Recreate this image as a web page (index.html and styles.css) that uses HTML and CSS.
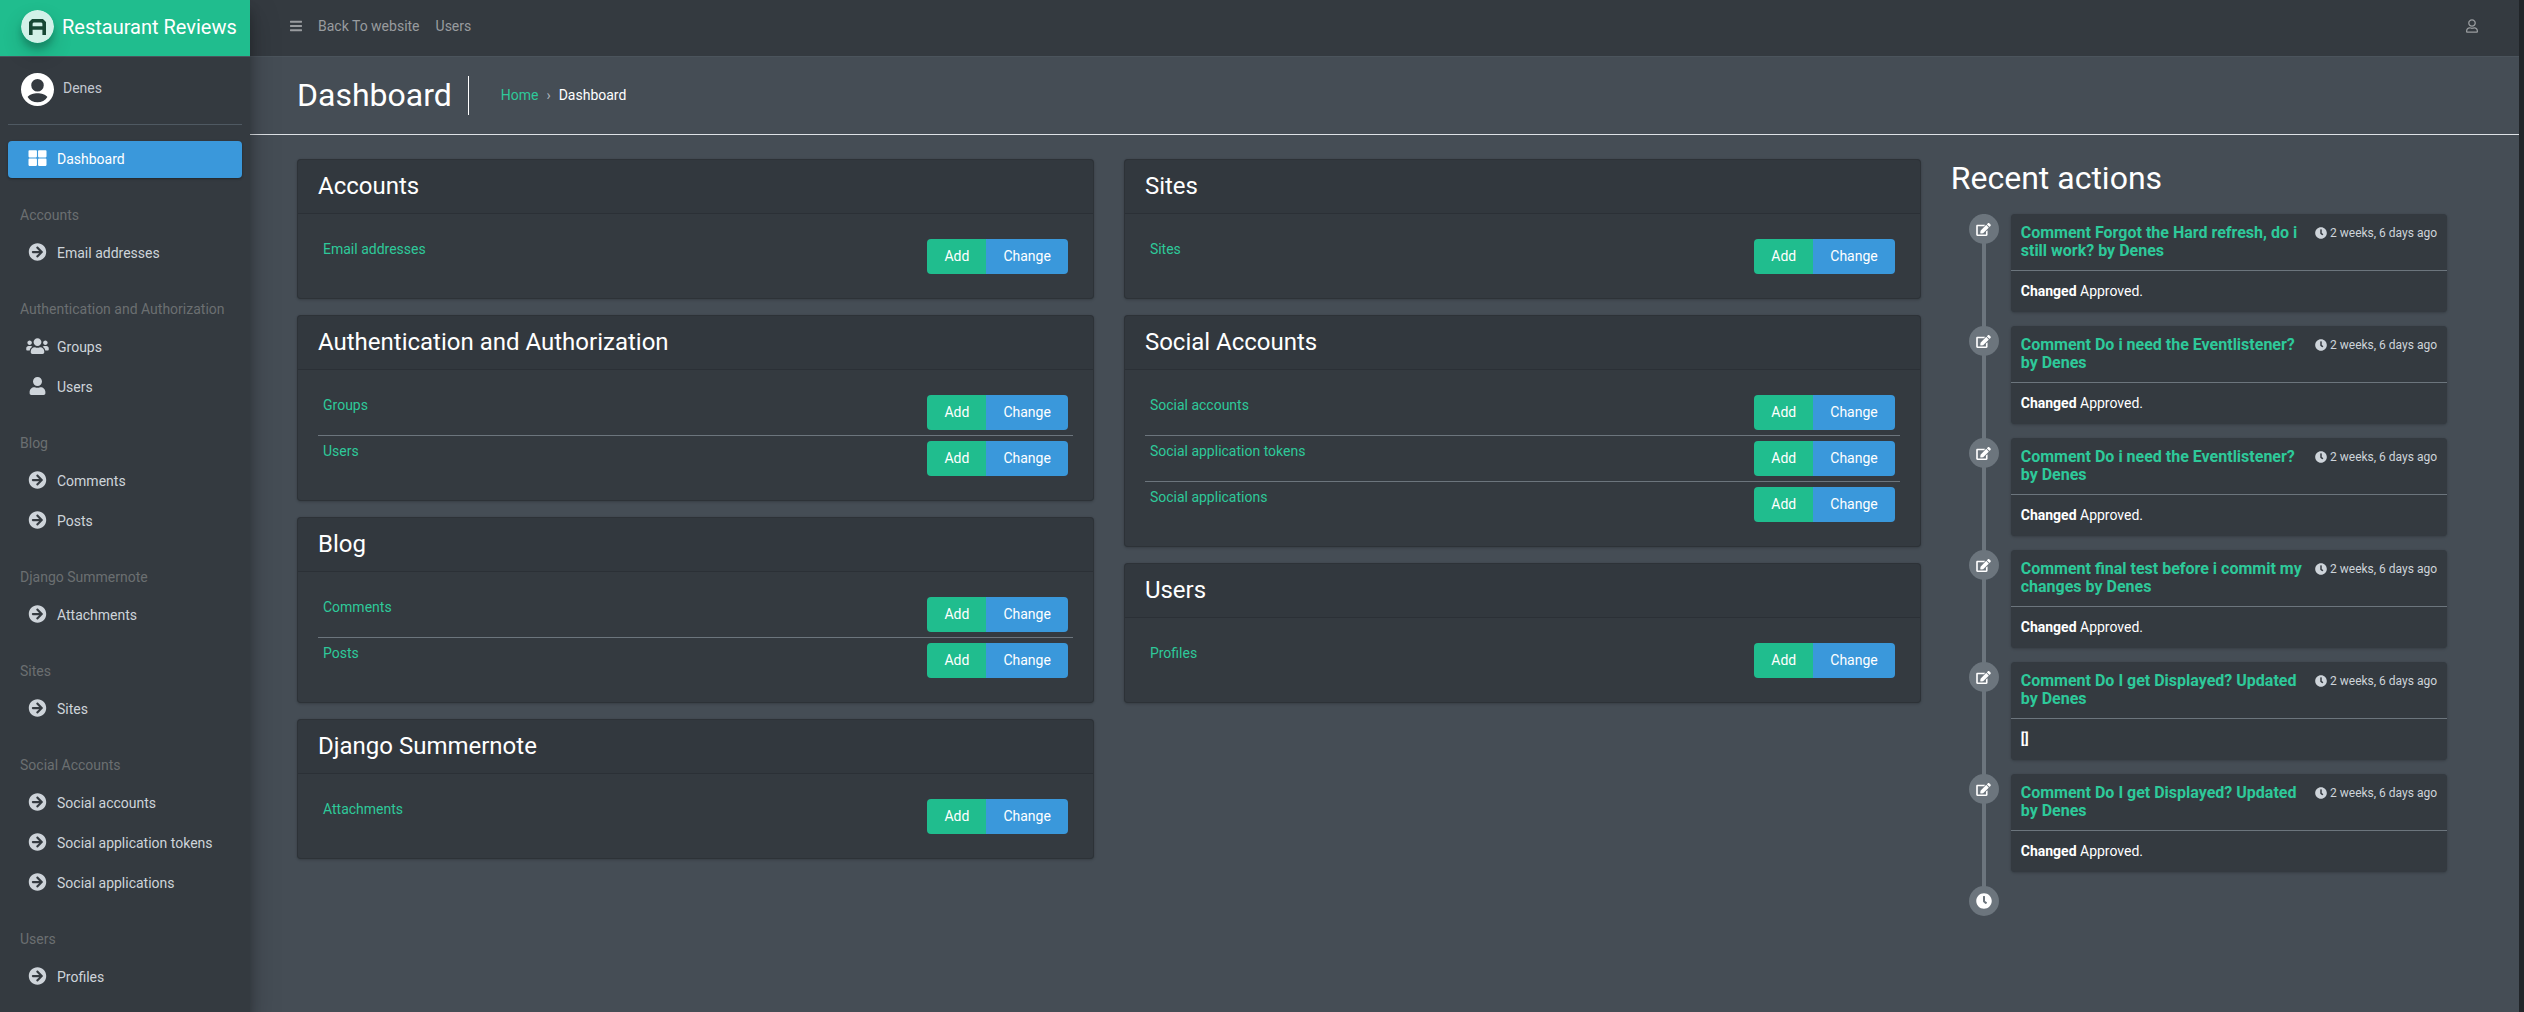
FILE: index.html
```html
<!DOCTYPE html>
<html lang="en">
<head>
<meta charset="utf-8">
<meta name="viewport" content="width=device-width, initial-scale=1">
<title>Dashboard | Restaurant Reviews</title>
<link rel="stylesheet" href="styles.css">
</head>
<body>
<svg class="sprite" aria-hidden="true">
  <symbol id="arrow" viewBox="0 0 512 512"><path d="M256 8c137 0 248 111 248 248S393 504 256 504 8 393 8 256 119 8 256 8zm-28.9 143.6l75.5 72.4H120c-13.3 0-24 10.7-24 24v16c0 13.3 10.7 24 24 24h182.6l-75.5 72.4c-9.7 9.3-9.9 24.8-.4 34.3l11 10.9c9.4 9.4 24.6 9.4 33.9 0L404.3 273c9.4-9.4 9.4-24.6 0-33.9L271.6 106.3c-9.4-9.4-24.6-9.4-33.9 0l-11 10.9c-9.5 9.6-9.3 25.1.4 34.4z"/></symbol>
  <symbol id="tiles" viewBox="0 0 512 512"><path d="M296 32h192c13.3 0 24 10.7 24 24v160c0 13.3-10.7 24-24 24H296c-13.3 0-24-10.7-24-24V56c0-13.3 10.7-24 24-24zm-80 0H24C10.7 32 0 42.7 0 56v160c0 13.3 10.7 24 24 24h192c13.3 0 24-10.7 24-24V56c0-13.3-10.7-24-24-24zM0 296v160c0 13.3 10.7 24 24 24h192c13.3 0 24-10.7 24-24V296c0-13.3-10.7-24-24-24H24c-13.3 0-24 10.7-24 24zm296 184h192c13.3 0 24-10.7 24-24V296c0-13.3-10.7-24-24-24H296c-13.3 0-24 10.7-24 24v160c0 13.3 10.7 24 24 24z"/></symbol>
  <symbol id="group" viewBox="0 0 640 512"><path d="M96 224c35.3 0 64-28.7 64-64s-28.7-64-64-64-64 28.7-64 64 28.7 64 64 64zm448 0c35.3 0 64-28.7 64-64s-28.7-64-64-64-64 28.7-64 64 28.7 64 64 64zm32 32h-64c-17.6 0-33.5 7.1-45.1 18.6 40.3 22.1 68.9 62 75.1 109.4h66c17.7 0 32-14.3 32-32v-32c0-35.3-28.7-64-64-64zm-256 0c61.9 0 112-50.1 112-112S381.9 32 320 32 208 82.1 208 144s50.1 112 112 112zm76.8 32h-8.3c-20.8 10-43.9 16-68.5 16s-47.6-6-68.5-16h-8.3C179.6 288 128 339.6 128 403.2V432c0 26.5 21.5 48 48 48h288c26.5 0 48-21.5 48-48v-28.8c0-63.6-51.6-115.2-115.2-115.2zm-223.7-13.4C161.5 263.1 145.6 256 128 256H64c-35.3 0-64 28.7-64 64v32c0 17.7 14.3 32 32 32h65.9c6.3-47.4 34.9-87.3 75.2-109.4z"/></symbol>
  <symbol id="person" viewBox="0 0 448 512"><path d="M224 256c70.7 0 128-57.3 128-128S294.7 0 224 0 96 57.3 96 128s57.3 128 128 128zm89.6 32h-16.7c-22.2 10.2-46.9 16-72.9 16s-50.6-5.8-72.9-16h-16.7C60.2 288 0 348.2 0 422.4V464c0 26.5 21.5 48 48 48h352c26.5 0 48-21.5 48-48v-41.6c0-74.2-60.2-134.4-134.4-134.4z"/></symbol>
  <symbol id="person-outline" viewBox="0 0 448 512"><path d="M313.6 304c-28.7 0-42.5 16-89.6 16-47.1 0-60.8-16-89.6-16C60.2 304 0 364.2 0 438.4V464c0 26.5 21.5 48 48 48h352c26.5 0 48-21.5 48-48v-25.6c0-74.2-60.2-134.4-134.4-134.4zM400 464H48v-25.6c0-47.6 38.8-86.4 86.4-86.4 14.6 0 38.3 16 89.6 16 51.7 0 74.9-16 89.6-16 47.6 0 86.4 38.8 86.4 86.4V464zM224 288c79.5 0 144-64.5 144-144S303.5 0 224 0 80 64.5 80 144s64.5 144 144 144zm0-240c52.9 0 96 43.1 96 96s-43.1 96-96 96-96-43.1-96-96 43.1-96 96-96z"/></symbol>
  <symbol id="bars" viewBox="0 0 448 512"><path d="M16 132h416c8.8 0 16-7.2 16-16V76c0-8.8-7.2-16-16-16H16C7.2 60 0 67.2 0 76v40c0 8.8 7.2 16 16 16zm0 160h416c8.8 0 16-7.2 16-16v-40c0-8.8-7.2-16-16-16H16c-8.8 0-16 7.2-16 16v40c0 8.8 7.2 16 16 16zm0 160h416c8.8 0 16-7.2 16-16v-40c0-8.8-7.2-16-16-16H16c-8.8 0-16 7.2-16 16v40c0 8.8 7.2 16 16 16z"/></symbol>
  <symbol id="clock" viewBox="0 0 512 512"><path d="M256 8C119 8 8 119 8 256s111 248 248 248 248-111 248-248S393 8 256 8zm92.5 313l-20 25a16 16 0 0 1-22.5 2.5l-67-49.7a40 40 0 0 1-15-31.2V112a16 16 0 0 1 16-16h32a16 16 0 0 1 16 16v144l58 42.5a16 16 0 0 1 2.5 22.5z"/></symbol>
  <symbol id="edit" viewBox="0 0 576 512"><path d="M402.6 83.2l90.2 90.2c3.8 3.8 3.8 10 0 13.8L274.4 405.6l-92.8 10.3c-12.4 1.4-22.9-9.1-21.5-21.5l10.3-92.8L388.8 83.2c3.8-3.8 10-3.8 13.8 0zm162-22.9l-48.8-48.8c-15.2-15.2-39.9-15.2-55.2 0l-35.4 35.4c-3.8 3.8-3.8 10 0 13.8l90.2 90.2c3.8 3.8 10 3.8 13.8 0l35.4-35.4c15.2-15.3 15.2-40 0-55.2zM384 346.2V448H64V128h229.8c3.2 0 6.2-1.3 8.5-3.5l40-40c7.6-7.6 2.2-20.5-8.5-20.5H48C21.5 64 0 85.5 0 112v352c0 26.5 21.5 48 48 48h352c26.5 0 48-21.5 48-48V306.2c0-10.7-12.9-16-20.5-8.5l-40 40c-2.2 2.3-3.5 5.3-3.5 8.5z"/></symbol>
</svg>

<div class="app">
  <aside class="sidebar">
    <a class="brand" href="#">
      <svg class="brand-logo" viewBox="0 0 33 33" aria-hidden="true">
        <circle cx="16.5" cy="16.5" r="16.5" fill="#fff"/>
        <path d="M9.8 25V12.8l2-2h9.400l2 2V25M9.800 18h13.400" fill="none" stroke="#152b20" stroke-width="3.6"/>
      </svg>
      <span>Restaurant Reviews</span>
    </a>
    <div class="sidebar-body">
      <div class="user-panel">
        <svg class="avatar" viewBox="2 2 20 20" aria-hidden="true"><path d="M12 2C6.5 2 2 6.5 2 12s4.5 10 10 10 10-4.5 10-10S17.5 2 12 2zm0 3.600a3.800 3.800 0 1 1 0 7.600 3.800 3.800 0 0 1 0-7.600zm0 14.100c-2.500 0-4.800-1.100-6-3.200.8-1.500 3.800-2.300 6-2.300s5.200.8 6 2.300c-1.200 2.100-3.500 3.200-6 3.200z"/></svg>
        <a href="#">Denes</a>
      </div>
      <nav class="side-nav" aria-label="Applications">
        <a class="side-link active" href="#"><svg><use href="#tiles"/></svg>Dashboard</a>
        <h2>Accounts</h2>
        <a class="side-link" href="#"><svg><use href="#arrow"/></svg>Email addresses</a>
        <h2>Authentication and Authorization</h2>
        <a class="side-link" href="#"><svg><use href="#group"/></svg>Groups</a>
        <a class="side-link" href="#"><svg><use href="#person"/></svg>Users</a>
        <h2>Blog</h2>
        <a class="side-link" href="#"><svg><use href="#arrow"/></svg>Comments</a>
        <a class="side-link" href="#"><svg><use href="#arrow"/></svg>Posts</a>
        <h2>Django Summernote</h2>
        <a class="side-link" href="#"><svg><use href="#arrow"/></svg>Attachments</a>
        <h2>Sites</h2>
        <a class="side-link" href="#"><svg><use href="#arrow"/></svg>Sites</a>
        <h2>Social Accounts</h2>
        <a class="side-link" href="#"><svg><use href="#arrow"/></svg>Social accounts</a>
        <a class="side-link" href="#"><svg><use href="#arrow"/></svg>Social application tokens</a>
        <a class="side-link" href="#"><svg><use href="#arrow"/></svg>Social applications</a>
        <h2>Users</h2>
        <a class="side-link" href="#"><svg><use href="#arrow"/></svg>Profiles</a>
      </nav>
    </div>
  </aside>

  <div class="page">
    <header class="topbar">
      <button class="icon-button" type="button" aria-label="Toggle menu"><svg><use href="#bars"/></svg></button>
      <a href="#">Back To website</a>
      <a href="#">Users</a>
      <button class="icon-button account" type="button" aria-label="Account"><svg><use href="#person-outline"/></svg></button>
    </header>

    <div class="content-header">
      <h1>Dashboard</h1>
      <nav class="breadcrumb" aria-label="Breadcrumb">
        <a href="#">Home</a><span class="sep">›</span><span>Dashboard</span>
      </nav>
    </div>

    <main class="content">
      <div class="column">
        <section class="card">
          <h2>Accounts</h2>
          <div class="card-body"><table>
            <tr><th scope="row"><a href="#">Email addresses</a></th><td><div class="actions"><button type="button" class="add">Add</button><button type="button" class="change">Change</button></div></td></tr>
          </table></div>
        </section>
        <section class="card">
          <h2>Authentication and Authorization</h2>
          <div class="card-body"><table>
            <tr><th scope="row"><a href="#">Groups</a></th><td><div class="actions"><button type="button" class="add">Add</button><button type="button" class="change">Change</button></div></td></tr>
            <tr><th scope="row"><a href="#">Users</a></th><td><div class="actions"><button type="button" class="add">Add</button><button type="button" class="change">Change</button></div></td></tr>
          </table></div>
        </section>
        <section class="card">
          <h2>Blog</h2>
          <div class="card-body"><table>
            <tr><th scope="row"><a href="#">Comments</a></th><td><div class="actions"><button type="button" class="add">Add</button><button type="button" class="change">Change</button></div></td></tr>
            <tr><th scope="row"><a href="#">Posts</a></th><td><div class="actions"><button type="button" class="add">Add</button><button type="button" class="change">Change</button></div></td></tr>
          </table></div>
        </section>
        <section class="card">
          <h2>Django Summernote</h2>
          <div class="card-body"><table>
            <tr><th scope="row"><a href="#">Attachments</a></th><td><div class="actions"><button type="button" class="add">Add</button><button type="button" class="change">Change</button></div></td></tr>
          </table></div>
        </section>
      </div>

      <div class="column">
        <section class="card">
          <h2>Sites</h2>
          <div class="card-body"><table>
            <tr><th scope="row"><a href="#">Sites</a></th><td><div class="actions"><button type="button" class="add">Add</button><button type="button" class="change">Change</button></div></td></tr>
          </table></div>
        </section>
        <section class="card">
          <h2>Social Accounts</h2>
          <div class="card-body"><table>
            <tr><th scope="row"><a href="#">Social accounts</a></th><td><div class="actions"><button type="button" class="add">Add</button><button type="button" class="change">Change</button></div></td></tr>
            <tr><th scope="row"><a href="#">Social application tokens</a></th><td><div class="actions"><button type="button" class="add">Add</button><button type="button" class="change">Change</button></div></td></tr>
            <tr><th scope="row"><a href="#">Social applications</a></th><td><div class="actions"><button type="button" class="add">Add</button><button type="button" class="change">Change</button></div></td></tr>
          </table></div>
        </section>
        <section class="card">
          <h2>Users</h2>
          <div class="card-body"><table>
            <tr><th scope="row"><a href="#">Profiles</a></th><td><div class="actions"><button type="button" class="add">Add</button><button type="button" class="change">Change</button></div></td></tr>
          </table></div>
        </section>
      </div>

      <section class="recent">
        <h2>Recent actions</h2>
        <ol class="timeline">
          <li>
            <span class="marker"><svg><use href="#edit"/></svg></span>
            <article>
              <header><h3><a href="#">Comment Forgot the Hard refresh, do i still work? by Denes</a></h3><time><svg><use href="#clock"/></svg>2 weeks, 6 days ago</time></header>
              <p><strong>Changed</strong> Approved.</p>
            </article>
          </li>
          <li>
            <span class="marker"><svg><use href="#edit"/></svg></span>
            <article>
              <header><h3><a href="#">Comment Do i need the Eventlistener? by Denes</a></h3><time><svg><use href="#clock"/></svg>2 weeks, 6 days ago</time></header>
              <p><strong>Changed</strong> Approved.</p>
            </article>
          </li>
          <li>
            <span class="marker"><svg><use href="#edit"/></svg></span>
            <article>
              <header><h3><a href="#">Comment Do i need the Eventlistener? by Denes</a></h3><time><svg><use href="#clock"/></svg>2 weeks, 6 days ago</time></header>
              <p><strong>Changed</strong> Approved.</p>
            </article>
          </li>
          <li>
            <span class="marker"><svg><use href="#edit"/></svg></span>
            <article>
              <header><h3><a href="#">Comment final test before i commit my changes by Denes</a></h3><time><svg><use href="#clock"/></svg>2 weeks, 6 days ago</time></header>
              <p><strong>Changed</strong> Approved.</p>
            </article>
          </li>
          <li>
            <span class="marker"><svg><use href="#edit"/></svg></span>
            <article>
              <header><h3><a href="#">Comment Do I get Displayed? Updated by Denes</a></h3><time><svg><use href="#clock"/></svg>2 weeks, 6 days ago</time></header>
              <p><strong>[]</strong></p>
            </article>
          </li>
          <li>
            <span class="marker"><svg><use href="#edit"/></svg></span>
            <article>
              <header><h3><a href="#">Comment Do I get Displayed? Updated by Denes</a></h3><time><svg><use href="#clock"/></svg>2 weeks, 6 days ago</time></header>
              <p><strong>Changed</strong> Approved.</p>
            </article>
          </li>
          <li class="end"><span class="marker"><svg><use href="#clock"/></svg></span></li>
        </ol>
      </section>
    </main>
  </div>
</div>
</body>
</html>
```
FILE: styles.css
```css
:root {
  --dark: #343a40;
  --surface: #454d55;
  --green: #20bd8e;
  --link: #2ec99a;
  --blue: #3a98db;
  --muted: #6c757d;
}

* { box-sizing: border-box; }

body {
  margin: 0;
  background: #212529;
  color: #fff;
  font: 400 14px/21px Roboto, sans-serif;
}

h1, h2, h3, p, ol { margin: 0; padding: 0; font-weight: 400; }
ol { list-style: none; }
a { color: var(--link); text-decoration: none; }
svg { fill: currentColor; flex: none; }
.sprite { display: none; }

button {
  border: 0;
  background: none;
  color: inherit;
  font: inherit;
  cursor: pointer;
}

.app {
  display: grid;
  grid-template-columns: 250px minmax(0, 1fr);
  min-height: 100vh;
  margin-right: 5px;
  background: var(--surface);
}

/* Sidebar */
.sidebar {
  z-index: 1;
  background: var(--dark);
  box-shadow: 0 14px 28px rgba(0, 0, 0, .25), 0 10px 10px rgba(0, 0, 0, .22);
}

.brand {
  display: flex;
  gap: 8px;
  height: 57px;
  padding: 10px 0 0 21px;
  border-bottom: 1px solid #4b545c;
  background: var(--green);
  color: #fff;
  font-size: 20px;
  line-height: 35px;
  white-space: nowrap;
}

.brand-logo {
  width: 33px;
  height: 33px;
  border-radius: 50%;
  opacity: .8;
  box-shadow: 0 10px 20px rgba(0, 0, 0, .19), 0 6px 6px rgba(0, 0, 0, .23);
}

.sidebar-body { padding: 0 8px; }

.user-panel {
  display: flex;
  gap: 9px;
  height: 68px;
  margin-bottom: 16px;
  padding: 16px 13px 0;
  border-bottom: 1px solid #4f5962;
}

.user-panel a { padding-top: 5px; color: #c2c7d0; }
.avatar { width: 33px; height: 33px; fill: #fff; }

.side-nav h2 {
  padding: 24px 12px 9px;
  color: #6b6f71;
  font-size: 14px;
  line-height: 21px;
  white-space: nowrap;
}

.side-link {
  display: flex;
  gap: 6px;
  height: 37px;
  margin-bottom: 3px;
  padding: 8px 16px;
  border-radius: 4px;
  color: #ced4da;
}

.side-link svg { width: 27px; height: 18px; fill: #ced4da; }

.side-link.active {
  background: var(--blue);
  color: #fff;
  box-shadow: 0 1px 3px rgba(0, 0, 0, .12), 0 1px 2px rgba(0, 0, 0, .24);
}

.side-link.active svg { fill: #fff; }

/* Top bar */
.topbar {
  display: flex;
  align-items: center;
  gap: 16px;
  height: 57px;
  padding: 0 41px 4px 40px;
  border-bottom: 1px solid #4b545c;
  background: var(--dark);
  color: #999c9f;
}

.topbar a { color: inherit; }
.icon-button { display: flex; padding: 0; }
.icon-button svg { width: 12px; height: 14px; }
.account { margin-left: auto; }

/* Page heading */
.content-header {
  display: flex;
  align-items: center;
  gap: 32px;
  padding: 19px 47px;
  border-bottom: 1px solid #dee2e6;
}

h1 {
  padding-right: 16px;
  border-right: 1px solid #fff;
  font-size: 32px;
  line-height: 39px;
}

.breadcrumb { display: flex; gap: 8px; }
.sep { color: #adb5bd; }

/* Dashboard content: each column carries half of the gutter on both sides */
.content {
  display: grid;
  grid-template-columns: minmax(0, 3fr) minmax(0, 3fr) minmax(0, 2fr);
  padding: 24px 32px;
}

.content > * { padding: 0 15px; }

.column { display: flex; flex-direction: column; gap: 16px; }

.card {
  border: 1px solid rgba(0, 0, 0, .13);
  border-radius: 4px;
  background: var(--dark);
  box-shadow: 0 0 1px rgba(0, 0, 0, .13), 0 1px 3px rgba(0, 0, 0, .2);
}

.card h2 {
  padding: 12px 20px;
  border-bottom: 1px solid rgba(0, 0, 0, .13);
  background: rgba(0, 0, 0, .03);
  font-size: 24px;
  line-height: 29px;
}

.card-body { padding: 20px 20px 19px; }

table { width: 100%; border-collapse: separate; border-spacing: 0; }
th, td { padding: 5px; font-weight: 400; text-align: left; vertical-align: top; }
tr + tr > * { border-top: 1px solid var(--muted); }

.actions { display: flex; justify-content: flex-end; }
.actions button { height: 35px; padding: 0 17px; color: #fff; }
.actions .add { border-radius: 4px 0 0 4px; background: var(--green); }
.actions .change { border-radius: 0 4px 4px 0; background: var(--blue); }

/* Recent actions */
.recent h2 { margin-bottom: 17px; font-size: 32px; line-height: 38px; }

.timeline {
  padding: 0 25px 0 18px;
  background: linear-gradient(var(--muted), var(--muted)) 31px 0 / 4px calc(100% - 15px) no-repeat;
}

.timeline li { display: flex; gap: 12px; margin-bottom: 14px; }
.timeline .end { margin: 0; }

.marker {
  display: flex;
  flex: none;
  align-items: center;
  justify-content: center;
  width: 30px;
  height: 30px;
  border-radius: 50%;
  background: var(--muted);
}

.marker svg { width: 15px; height: 13px; }
.end .marker svg { width: 16px; height: 16px; }

.timeline article {
  flex: 1;
  border-radius: 4px;
  background: var(--dark);
  box-shadow: 0 0 1px rgba(0, 0, 0, .13), 0 1px 3px rgba(0, 0, 0, .2);
}

.timeline header {
  display: flex;
  justify-content: space-between;
  gap: 6px;
  padding: 10px;
  border-bottom: 1px solid var(--muted);
}

h3 { font-size: 16px; line-height: 18px; }
h3 a { font-weight: 700; }

time {
  display: flex;
  flex: none;
  align-items: center;
  gap: 3px;
  height: 18px;
  color: #ced4da;
  font-size: 12px;
}

time svg { width: 12px; height: 12px; }
.timeline p { padding: 10px; }
```
